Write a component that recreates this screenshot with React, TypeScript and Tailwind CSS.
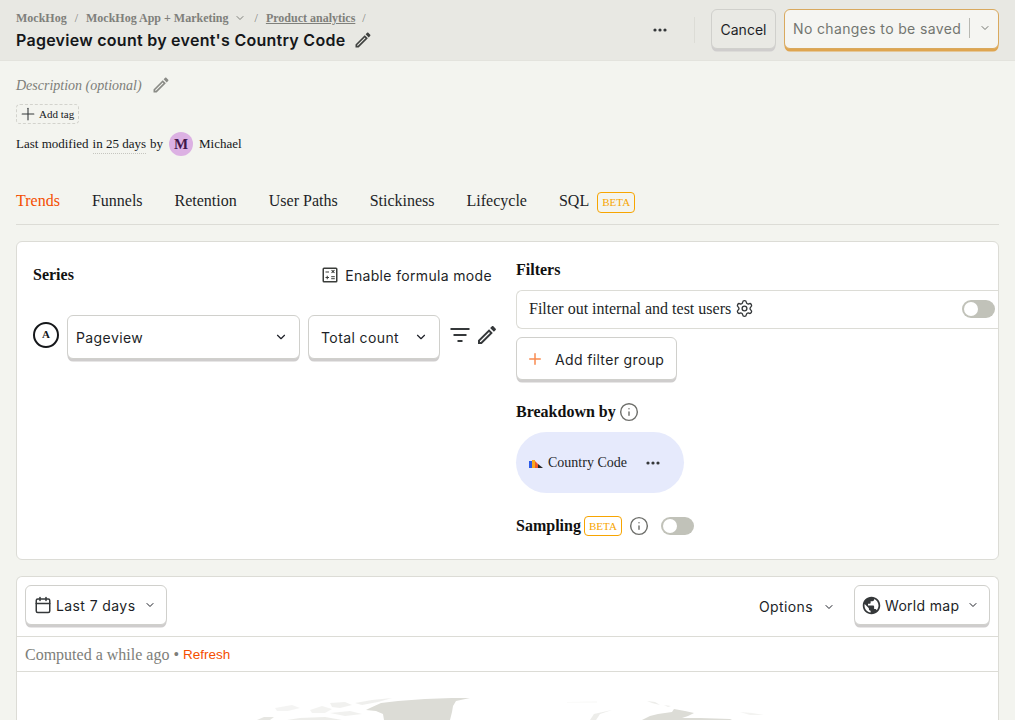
import React from "react";
import { ChevronDown, Plus, Settings, Info, Calendar } from "lucide-react";

const serif = "font-['Liberation_Serif',serif]";
const inter = "font-['Inter',sans-serif]";

function Pencil({ className }: { className?: string }) {
  return (
    <svg viewBox="0 0 24 24" fill="currentColor" className={className}>
      <path d="M14.06 9.02l.92.92L5.92 19H5v-.92l9.06-9.06M17.66 3c-.25 0-.51.1-.7.29l-1.83 1.83 3.75 3.75 1.83-1.83c.39-.39.39-1.02 0-1.41l-2.34-2.34c-.2-.2-.45-.29-.71-.29zm-3.6 3.19L3 17.25V21h3.75L17.81 9.94l-3.75-3.75z" />
    </svg>
  );
}

function Dots({ className }: { className?: string }) {
  return (
    <svg viewBox="0 0 14 4" fill="currentColor" className={className}>
      <circle cx="2" cy="2" r="1.6" />
      <circle cx="7" cy="2" r="1.6" />
      <circle cx="12" cy="2" r="1.6" />
    </svg>
  );
}

function Calc() {
  return (
    <svg viewBox="0 0 16 16" fill="#3a3d3a" className="w-4 h-4">
      <path fillRule="evenodd" d="M2 0.5h12A1.5 1.5 0 0 1 15.5 2v12a1.5 1.5 0 0 1-1.5 1.5H2A1.5 1.5 0 0 1 .5 14V2A1.5 1.5 0 0 1 2 .5zM2 2v12h12V2z" />
      <rect x="3.5" y="4.5" width="3.5" height="1" />
      <path d="M9.2 3.4l.7-.7 1.1 1.1 1.1-1.1.7.7-1.1 1.1 1.1 1.1-.7.7-1.1-1.1-1.1 1.1-.7-.7 1.1-1.1z" />
      <rect x="3.5" y="10" width="3.5" height="1" />
      <rect x="4.75" y="8.75" width="1" height="3.5" />
      <rect x="9.2" y="9.2" width="3.6" height="1" />
      <rect x="9.2" y="11.2" width="3.6" height="1" />
    </svg>
  );
}

function FilterIcon() {
  return (
    <svg viewBox="0 0 20 14" fill="#35383a" className="w-5 h-[14px]">
      <rect x="0.5" y="0" width="19" height="2" />
      <rect x="3.5" y="6" width="13" height="2" />
      <rect x="7.5" y="12" width="5" height="2" />
    </svg>
  );
}

function Globe() {
  return (
    <svg viewBox="0 0 24 24" fill="#35383a" className="w-[21px] h-[21px]">
      <path d="M12 2C6.48 2 2 6.48 2 12s4.48 10 10 10 10-4.48 10-10S17.52 2 12 2zm-1 17.93c-3.95-.49-7-3.85-7-7.93 0-.62.08-1.21.21-1.79L9 15v1c0 1.1.9 2 2 2v1.93zm6.9-2.54c-.26-.81-1-1.39-1.9-1.39h-1v-3c0-.55-.45-1-1-1H8v-2h2c.55 0 1-.45 1-1V7h2c1.1 0 2-.9 2-2v-.41c2.93 1.19 5 4.06 5 7.41 0 2.08-.8 3.97-2.1 5.39z" />
    </svg>
  );
}

function Toggle() {
  return (
    <span className="flex items-center w-[33px] h-[18px] rounded-full bg-[#c1c2b9] px-[2px]">
      <span className="w-[14px] h-[14px] rounded-full bg-white" />
    </span>
  );
}

function Beta({ className }: { className?: string }) {
  return (
    <span className={`${serif} inline-flex items-center justify-center border border-[#f7a501] rounded-[4px] text-[#f7a501] text-[11px] ${className ?? ""}`}>
      BETA
    </span>
  );
}

function RaisedButton({ className, children }: { className?: string; children: React.ReactNode }) {
  return (
    <div className={`${inter} flex items-center bg-white rounded-[6px] border border-[#d0d0cc] shadow-[0_3px_0_-0.5px_#cfcdcd] text-[14px] tracking-[0.4px] text-[#1d1f27] ${className ?? ""}`}>
      {children}
    </div>
  );
}

function Header() {
  return (
    <div className="flex items-center h-[61px] bg-[#e8e8e3] border-b border-[#e3e3dd] pl-4 pr-4">
      <div className="flex-1 min-w-0">
        <div className={`${serif} flex items-center font-bold text-[12px] text-[#7f807b] h-[18px]`}>
          <span>MockHog</span>
          <span className="ml-[8px] font-normal">/</span>
          <span className="ml-[8px]">MockHog App + Marketing</span>
          <ChevronDown className="w-3 h-3 ml-[5px]" strokeWidth={2} />
          <span className="ml-[9px] font-normal">/</span>
          <span className="ml-[8px] underline">Product analytics</span>
          <span className="ml-[7px] font-normal">/</span>
        </div>
        <div className={`${inter} flex items-center gap-[8px] h-[24px] font-semibold text-[16px] tracking-[0.27px] text-[#15171a] mt-[1px]`}>
          <span>Pageview count by event's Country Code</span>
          <Pencil className="w-[20px] h-[20px] text-[#404240]" />
        </div>
      </div>
      <Dots className="w-[14px] h-[4px] text-[#35383a] mr-[27px]" />
      <div className="w-px h-[26px] bg-[#dcdcd6] mr-[16px]" />
      <div className={`${inter} flex items-center justify-center w-[65px] h-[40px] mb-[2px] bg-[#e9e9e4] rounded-[6px] border border-[#d0d0cc] shadow-[0_3px_0_-0.5px_#cfcdcd] text-[14px] text-[#1d1f27] mr-[8px]`}>
        Cancel
      </div>
      <div className={`${inter} flex items-center w-[215px] h-[40px] mb-[2px] pb-[2px] bg-[#f5f5f2] rounded-[6px] border border-[#d9a95e] shadow-[0_3px_0_-0.5px_#dfa550] text-[14px] tracking-[0.36px] text-[#737570] pl-2`}>
        <span>No changes to be saved</span>
        <span className="w-px h-[20px] bg-[#b8b8b2] ml-[8px]" />
        <ChevronDown className="w-3 h-3 ml-[9px] text-[#737570]" />
      </div>
    </div>
  );
}

function Meta() {
  return (
    <div className={`${serif} pl-4 text-[#15171a]`}>
      <div className="flex items-center gap-[9px] h-[24px] mt-[12px] italic text-[#7d7e79]">
        <span className="text-[14px]">Description (optional)</span>
        <Pencil className="w-[20px] h-[20px] text-[#8a8b86]" />
      </div>
      <div className="flex items-center w-[63px] h-[20px] mt-[7px] border border-dashed border-[#d3d3cd] rounded-[4px] pl-[1px] text-[11px]">
        <Plus className="w-[20px] h-[20px] mr-[1px] text-[#35383a]" strokeWidth={1.3} />
        <span>Add tag</span>
      </div>
      <div className="flex items-center h-[26px] mt-[7px] text-[13px]">
        <span>Last modified</span>
        <span className="ml-[4px] border-b border-dotted border-[#c5c5bf] leading-[17px] pb-[1px] mt-[1px]">in 25 days</span>
        <span className="ml-[4px]">by</span>
        <span className="ml-[6px] w-[24px] h-[24px] rounded-full bg-[#dcb1e3] text-[#42174a] flex items-center justify-center font-bold text-[15px]">M</span>
        <span className="ml-[6px]">Michael</span>
      </div>
    </div>
  );
}

function Tabs() {
  const tabs = ["Funnels", "Retention", "User Paths", "Stickiness", "Lifecycle"];
  return (
    <div className={`${serif} flex items-center gap-[32px] mx-4 mt-[20px] h-[48px] border-b border-[#dcdcd6] text-[16px] text-[#1d1f27]`}>
      <span className="text-[#f54e00]">Trends</span>
      {tabs.map((t) => (
        <span key={t}>{t}</span>
      ))}
      <span className="flex items-center gap-[8px]">
        SQL
        <Beta className="w-[38px] h-[21px] mt-[4px]" />
      </span>
    </div>
  );
}

function Series() {
  return (
    <div className="w-[466px] shrink-0">
      <div className="flex items-center justify-between h-[24px] mt-[5px] pr-[7px]">
        <span className={`${serif} font-bold text-[16px] text-[#111]`}>Series</span>
        <span className={`${inter} flex items-center gap-[7px] text-[14px] tracking-[0.34px] text-[#1d1f27]`}>
          <Calc />
          Enable formula mode
        </span>
      </div>
      <div className="flex items-center mt-[28px]">
        <span className={`${serif} flex items-center justify-center w-[26px] h-[26px] rounded-full border-2 border-[#15171a] font-bold text-[11px] text-[#15171a] mb-[5px]`}>A</span>
        <RaisedButton className="w-[233px] h-[44px] ml-[8px] pl-2 pr-[11px] justify-between">
          <span>Pageview</span>
          <ChevronDown className="w-[14px] h-[14px]" strokeWidth={2} />
        </RaisedButton>
        <RaisedButton className="w-[132px] h-[44px] ml-[8px] pl-3 pr-[11px] justify-between">
          <span>Total count</span>
          <ChevronDown className="w-[14px] h-[14px]" strokeWidth={2} />
        </RaisedButton>
        <div className="ml-[10px] mb-[5px]"><FilterIcon /></div>
        <Pencil className="w-[24px] h-[24px] ml-[5px] mb-[5px] text-[#35383a]" />
      </div>
    </div>
  );
}

function Filters() {
  return (
    <div className={`${serif} flex-1 min-w-0 text-[#111]`}>
      <div className="font-bold text-[16px] h-[24px] leading-[24px]">Filters</div>
      <div className="flex items-center h-[39px] mt-[8px] pb-[2px] pl-3 pr-[3px] border border-r-0 border-[#dcdcd6] rounded-l-[6px] bg-white text-[16px] text-[#1d1f27]">
        <span>Filter out internal and test users</span>
        <Settings className="w-[19px] h-[19px] ml-[4px] text-[#35383a]" strokeWidth={1.7} />
        <span className="ml-auto"><Toggle /></span>
      </div>
      <RaisedButton className="w-[161px] h-[43px] mt-[8px] pt-[1px] pl-[9px] tracking-[0.35px]">
        <Plus className="w-[18px] h-[18px] text-[#f98a4f]" strokeWidth={2} />
        <span className="ml-[11px]">Add filter group</span>
      </RaisedButton>
      <div className="flex items-center h-[24px] mt-[20px] font-bold text-[16px]">
        Breakdown by
        <Info className="w-[20px] h-[20px] ml-[3px] text-[#6d6e6a]" strokeWidth={1.7} />
      </div>
      <div className="flex items-center w-[168px] h-[61px] mt-[8px] rounded-full bg-[#e6eafc] pl-[13px] text-[14px] text-[#1d1f27]">
        <svg viewBox="0 0 15 10" className="w-[15px] h-[10px] mr-[4px]">
          <path d="M0 3h3v7H0z" fill="#2c5be8" />
          <path d="M3 2h3v8H3z" fill="#f8a91e" />
          <path d="M6 3l3 3v4H6z" fill="#ef5a2a" />
          <path d="M9 6l5 4H9z" fill="#26282b" />
        </svg>
        <span>Country Code</span>
        <Dots className="w-[14px] h-[4px] ml-[19px] text-[#35383a]" />
      </div>
      <div className="flex items-center h-[24px] mt-[21px] font-bold text-[16px]">
        Sampling
        <Beta className="w-[38px] h-[20px] ml-[3px] font-normal" />
        <Info className="w-[20px] h-[20px] ml-[7px] text-[#6d6e6a]" strokeWidth={1.7} />
        <span className="ml-[12px]"><Toggle /></span>
      </div>
    </div>
  );
}

function MapPreview() {
  return (
    <div className="h-[48px] overflow-hidden">
      <svg viewBox="17 672 981 48" className="w-[981px] h-[48px]" fill="#dcdcd6">
        <path d="M370 708 L381 703 L398 701 L425 699 L452 698 L470 698 L456 701 L453 706 L452 712 L450 720 L384 720 L383 714 L376 711 L366 710 Z" />
        <path d="M355 703 L372 700 L392 698 L378 702 L362 705 Z" opacity="0.45" />
        <path d="M330 703 L345 702 L352 705 L340 708 L332 707 Z" opacity="0.4" />
        <path d="M310 710 L322 706 L332 709 L325 713 L312 713 Z" opacity="0.35" />
        <path d="M275 708 L292 705 L300 708 L288 711 L277 711 Z" opacity="0.3" />
        <path d="M330 713 L350 711 L362 714 L345 716 Z" opacity="0.4" />
        <path d="M257 720 L264 717 L274 717 L270 720 Z" opacity="0.7" />
        <path d="M287 720 L300 718 L325 717 L342 720 Z" opacity="0.5" />
        <path d="M590 720 L594 714 L612 710 L600 714 L596 720 Z" opacity="0.5" />
        <path d="M567 702 L597 701 L597 703 L567 703 Z" opacity="0.12" />
        <path d="M642 720 L650 716 L658 714 L672 712 L674 709 L685 711 L694 713 L688 716 L682 718 L700 718 L730 719 L732 720 Z" />
        <path d="M647 701 L655 702 L660 705 L652 703 Z" opacity="0.5" />
        <path d="M664 705 L671 706 L668 707 Z" opacity="0.45" />
        <path d="M740 712 L752 713 L764 715 L750 715 Z" opacity="0.35" />
      </svg>
    </div>
  );
}

function Results() {
  return (
    <div className="mx-4 mt-4 bg-white border border-b-0 border-[#dcdcd6] rounded-t-[6px]">
      <div className="flex items-center h-[60px] px-2 border-b border-[#dcdcd6]">
        <RaisedButton className="w-[142px] h-[40px] pl-2 mb-[3px]">
          <Calendar className="w-[18px] h-[18px] text-[#35383a]" strokeWidth={2} />
          <span className="ml-[4px]">Last 7 days</span>
          <ChevronDown className="w-3 h-3 ml-[9px]" strokeWidth={2} />
        </RaisedButton>
        <span className={`${inter} flex items-center ml-auto text-[14px] tracking-[0.4px] text-[#1d1f27]`}>
          Options
          <ChevronDown className="w-3 h-3 ml-[10px]" strokeWidth={2} />
        </span>
        <RaisedButton className="w-[136px] h-[40px] ml-[19px] pl-[6px] mb-[3px]">
          <Globe />
          <span className="ml-[3px] tracking-[0.3px]">World map</span>
          <ChevronDown className="w-3 h-3 ml-[8px]" strokeWidth={2} />
        </RaisedButton>
      </div>
      <div className={`${serif} flex items-center h-[35px] pt-[1px] px-2 border-b border-[#dcdcd6] text-[16px] text-[#7d7e79]`}>
        Computed a while ago
        <span className="mx-[4px]">•</span>
        <span className="font-['Liberation_Sans',sans-serif] text-[13.5px] text-[#f54e00] mt-[2px]">Refresh</span>
      </div>
      <MapPreview />
    </div>
  );
}

export default function App() {
  return (
    <div className="h-[720px] overflow-hidden bg-[#f3f4ef]">
      <Header />
      <Meta />
      <Tabs />
      <div className="flex mx-4 mt-4 h-[319px] pl-4 pt-4 pb-4 gap-[17px] bg-white border border-[#dcdcd6] rounded-[6px] overflow-hidden">
        <Series />
        <Filters />
      </div>
      <Results />
    </div>
  );
}
